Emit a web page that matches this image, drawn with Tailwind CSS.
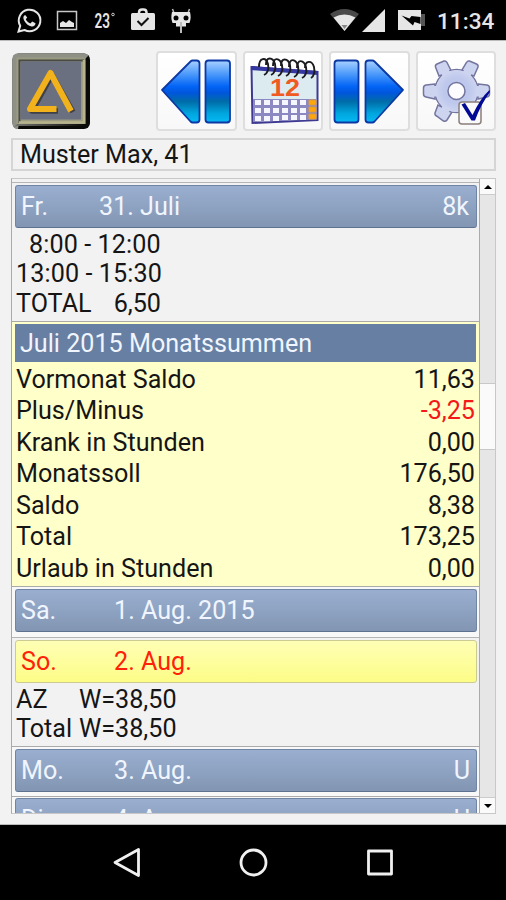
<!DOCTYPE html>
<html lang="de">
  <head>
    <meta charset="UTF-8" />
    <meta name="viewport" content="width=device-width, initial-scale=1.0" />
    <title>Zeiterfassung</title>
    <script src="https://cdn.jsdelivr.net/npm/@tailwindcss/browser@4"></script>
  </head>
  <body class="bg-black">
    <div class="flex h-[900px] w-[506px] flex-col overflow-hidden bg-[#f2f2f2] font-['Roboto',sans-serif] text-[25.150px] text-[#151515]">
      <!-- Status bar -->
      <header class="flex h-10 shrink-0 items-center bg-black text-[#e6e6e6]">
        <svg class="h-10 w-[200px]" viewBox="0 0 200 40">
          <path d="M18.500 31.500l1.700-5.700A10.800 10.800 0 1 1 24.500 30z" fill="none" stroke="#e6e6e6" stroke-width="2" />
          <path d="M25.200 15c-2 .8-2.300 3-1.200 5.200 1.600 3.300 4.500 5.700 7.600 6.300 2 .3 4-1 3.900-3.200l-3.300-1.700-1.800 1.900c-2.200-.8-3.600-2.200-4.600-4.200l1.400-1.700z" fill="#e6e6e6" />
          <rect x="57.500" y="11.500" width="19" height="18" fill="none" stroke="#c8c8c8" stroke-width="1.500" />
          <path d="M60 27v-4l3-2 3 2 3-3 3 2 2 1v4z" fill="#e6e6e6" />
          <text x="94.500" y="27.500" font-size="19.500" font-weight="600" textLength="15.500" lengthAdjust="spacingAndGlyphs" fill="#e6e6e6">23</text>
          <circle cx="113" cy="14.500" r="1.300" fill="none" stroke="#ccc" />
          <path d="M139 14v-1.500q0-3 3-3h1.500q3 0 3 3V14" fill="none" stroke="#e6e6e6" stroke-width="2.500" />
          <rect x="131" y="13" width="24" height="17" rx="1.500" fill="#e6e6e6" />
          <path d="M137.500 21l4 4 7-7" fill="none" stroke="#111" stroke-width="2" />
          <path d="M174 13l-1.500-4M188 13l1.500-4" stroke="#bbb" stroke-width="1.500" />
          <path d="M172 12h18q1.500 6-.5 11H186v3.500h-10V23h-3.500q-2-5-.5-11z" fill="#e6e6e6" />
          <circle cx="176" cy="18" r="2.500" />
          <circle cx="186" cy="18" r="2.500" />
          <path d="M181 22v11" stroke="#bbb" stroke-width="2" />
        </svg>
        <svg class="ml-[130px] h-10 w-[100px]" viewBox="330 0 100 40">
          <path d="M330 14q14.500-10 29 0L344.500 31z" fill="#4a4a4a" />
          <path d="M333.500 17.500q11-6 22 0L344.500 31z" fill="#e6e6e6" />
          <path d="M341.500 25h6l-3 4z" fill="#888" />
          <path d="M385 9v23h-23z" fill="#e6e6e6" />
          <path d="M420 14h5v12h-5z" fill="#555" />
          <rect x="398" y="10" width="23" height="20" fill="#e6e6e6" />
          <path d="M401.500 15.500l8 3 2-2.500 9 1v7l-6-2-1.500 3.500z" />
        </svg>
        <span class="ml-[7px] w-[58px] whitespace-nowrap pt-1 text-[22.600px] font-medium">11:34</span>
      </header>

      <main class="flex h-[785px] shrink-0 flex-col border-y border-[#bbb] pr-[10px] pl-[11px]">
        <!-- Toolbar -->
        <div class="mt-[10px] flex h-20 shrink-0 gap-[6px]">
          <svg class="mt-0.5 mr-auto h-[78px] w-20" viewBox="11 53 80 78">
            <defs>
              <linearGradient id="edge" x1="0" y1="0" x2="1" y2="0">
                <stop offset="0" stop-color="#75766e" />
                <stop offset="1" stop-color="#0b0b0a" />
              </linearGradient>
            </defs>
            <rect x="12.500" y="53.500" width="77.500" height="75.500" rx="6" fill="#0a0a09" />
            <path d="M18 129q-5.500 0-5.500-6V59q0-5.500 5.500-5.500h66q3 0 4.500 2L84 60 19 124z" fill="#8f9187" />
            <path d="M14 127l5-5h65v4H17z" fill="url(#edge)" />
            <rect x="16.500" y="57.500" width="69" height="66.500" fill="#9b9b82" />
            <path d="M19.500 123V60.500H84" fill="none" stroke="#4b4b45" stroke-width="2" />
            <path d="M19 122.500h65V60" fill="none" stroke="#b6b38d" stroke-width="2.500" />
            <rect x="20.500" y="61.500" width="60.500" height="58" fill="#6b7080" />
            <path d="M58 111H32L52 75l21 37" fill="none" stroke="#404047" stroke-width="5.500" stroke-linejoin="round" />
            <path d="M56.500 109H30L50.500 73l20.500 38" fill="none" stroke="#f2b21c" stroke-width="6" stroke-linejoin="round" />
          </svg>
          <button class="h-20 w-[80.500px] rounded border-2 border-[#dedede] bg-linear-to-b from-white to-[#f8f8f8]">
            <svg class="h-[76px] w-[76px]" viewBox="158.500 53 76 76">
              <defs>
                <linearGradient id="blue" x1="0" y1="0" x2="0" y2="1">
                  <stop offset="0" stop-color="#a9d1ff" />
                  <stop offset=".22" stop-color="#4b99fb" />
                  <stop offset=".42" stop-color="#0264f5" />
                  <stop offset=".52" stop-color="#0056dd" />
                  <stop offset=".66" stop-color="#006ca8" />
                  <stop offset=".85" stop-color="#00a5dd" />
                  <stop offset="1" stop-color="#08b9f5" />
                </linearGradient>
              </defs>
              <g fill="url(#blue)" stroke="#0b38a5" stroke-width="1.800" stroke-linejoin="round">
                <path d="M162.500 90L191 61.500q1-1 2-1h4q3 0 3 3v56q0 3-3 3h-4q-1 0-2-1z" />
                <rect x="206" y="60.500" width="24.500" height="62" rx="3" />
              </g>
            </svg>
          </button>
          <button class="h-20 w-[80.500px] rounded border-2 border-[#dedede] bg-linear-to-b from-white to-[#f8f8f8]">
            <svg class="h-[76px] w-[76px]" viewBox="245 53 76 76">
              <path d="M251.500 67L317.500 72v48l-65 3z" fill="#dcebef" stroke="#3e3a92" stroke-width="2" />
              <path d="M251 68l67 5" stroke="#3538a0" stroke-width="4" />
              <path d="M253 99h64v20.500l-64 2.500z" fill="#8b88c2" />
              <g fill="#f5f6ff">
                <path d="M255 100h6v5h-6zM264 100h6v5h-6zM273 100h6v5h-6zM282 100h6v5h-6zM291 100h6v5h-6zM300 100h6v5h-6z" />
                <path d="M255 108h6v5h-6zM264 108h6v5h-6zM273 108h6v5h-6zM282 108h6v5h-6zM291 108h6v5h-6zM300 108h6v5h-6z" />
                <path d="M255 116h6v5h-6zM264 116h6v5h-6zM273 116h6v5h-6zM282 115h6v5h-6zM291 115h6v5h-6zM300 115h6v5h-6z" />
              </g>
              <path d="M309 100h7v5h-7zM309 107h7v5h-7zM309 114h7v5h-7z" fill="#ffa60c" stroke="#d99a3c" />
              <text x="270" y="95.500" font-family="Liberation Sans" font-size="23" font-weight="700" textLength="30" lengthAdjust="spacingAndGlyphs" fill="#f05a22">12</text>
              <g fill="none" stroke="#1b1b1f" stroke-width="1.900">
                <path d="M259 67c0-10 7-10 9-3 1 5 0 9-4 11" />
                <path d="M266 65c0-9 7-8 9-1 1 5 0 9-4 11" />
                <path d="M273 66c0-10 7-8 9-1 1 5 0 9-4 11" />
                <path d="M281 66c0-9 7-8 9-1 1 5 0 9-4 11" />
                <path d="M289 67c0-10 7-8 9-1 1 5 0 9-4 11" />
                <path d="M297 68c0-10 7-8 9-1 1 5 0 9-4 11" />
                <path d="M305 68c0-8 7-8 9-1 1 5 0 9-3 11" />
              </g>
            </svg>
          </button>
          <button class="h-20 w-[80.500px] rounded border-2 border-[#dedede] bg-linear-to-b from-white to-[#f8f8f8]">
            <svg class="h-[76px] w-[76px]" viewBox="331.500 53 76 76">
              <g fill="url(#blue)" stroke="#0b38a5" stroke-width="1.800" stroke-linejoin="round">
                <rect x="335" y="60.500" width="24" height="62" rx="3" />
                <path d="M403.500 90L375 61.500q-1-1-2-1h-4q-3 0-3 3v56q0 3 3 3h4q1 0 2-1z" />
              </g>
            </svg>
          </button>
          <button class="h-20 w-[80.500px] rounded border-2 border-[#dedede] bg-linear-to-b from-white to-[#f8f8f8]">
            <svg class="h-[76px] w-[76px]" viewBox="418 53 76 76">
              <defs>
                <radialGradient id="gear">
                  <stop offset="0" stop-color="#bcc5ea" />
                  <stop offset=".6" stop-color="#bec8ec" />
                  <stop offset="1" stop-color="#cdd4f0" />
                </radialGradient>
              </defs>
              <!-- Teeth are outlined first, then the hub is laid over them -->
              <g fill="#cdd4f0" stroke="#73759f" stroke-width="1.500">
                <path d="M439 76l-3.500-9q-.5-2 1.500-3l7-3q2-.5 3 1.500l4.500 9z" />
                <path d="M474 76l4-9q.5-2-1.500-3l-7-3q-2-.5-3 1.500l-5.500 9z" />
                <path d="M435 84l-9 1q-2.500.5-2.500 3v6q0 2.500 2.500 3l9 2z" />
                <path d="M478 84l9 1q2.500.5 2.500 3v6q0 2.500-2.500 3l-9 2z" />
                <path d="M438 105l-3 8q-.5 2 1.500 3l7 5q2 1 3.500-1l5-8z" />
                <path d="M475 105l3 8q.5 2-1.500 3l-6 5q-2 1-3.500-1l-5-8z" />
                <circle cx="456.500" cy="91" r="21.500" />
              </g>
              <circle cx="456.500" cy="91" r="21" fill="url(#gear)" />
              <path d="M436.500 86h-5v10.500h6zM476.500 86h5v10.500h-6zM442.500 76l-3.500-7 7-3 5 7zM470.500 76l3.500-7-7-3-5 7zM443 105l-4 8 6 4 6-8z" fill="#cdd4f0" />
              <circle cx="456.500" cy="91" r="8.500" fill="#fcfcff" stroke="#73759f" stroke-width="1.500" />
              <rect x="459" y="102" width="22" height="22" rx="3" fill="#fafafa" stroke="#8b7f7c" stroke-width="1.500" />
              <path d="M461.500 104.500l3.500-1.500 7.500 12q8-17 17-25l.5 2q-9 12-15 28.500h-3.500z" fill="#020994" />
            </svg>
          </button>
        </div>

        <!-- Employee -->
        <div class="mt-[7px] flex h-[33px] shrink-0 items-center border-2 border-[#d5d5d5] pl-[7px]">Muster Max, 41</div>

        <!-- Time sheet -->
        <div class="mt-[7px] flex h-[636px] shrink-0 overflow-hidden border border-[#c8c8c8] border-l-[#aaa]">
          <div class="flex h-full w-[468px] shrink-0 flex-col overflow-hidden border-r border-[#aaa]">
            <section class="mt-[3px] h-[139px] shrink-0 border-t border-[#b5b5b5]">
              <div class="mt-[2px] mr-[2px] ml-[3px] flex h-[43px] items-center rounded-[3px] border border-[#7085a5] border-b-[#5d7190] bg-linear-to-b from-[#9aafd0] to-[#8296b3] pr-[7px] pl-[5px] text-[#f0f5ff]">
                <span class="w-[78px]">Fr.</span>
                <span class="flex-1">31. Juli</span>
                <span>8k</span>
              </div>
              <div class="pt-[1.500px] pl-[4px] leading-[29.700px]">
                <p class="pl-[13px] tracking-[0.100px]">8:00 - 12:00</p>
                <p class="tracking-[0.100px]">13:00 - 15:30</p>
                <p class="flex w-[145px] justify-between"><span>TOTAL</span><span>6,50</span></p>
              </div>
            </section>

            <section class="h-[265px] shrink-0 border-t border-[#aaa] bg-[#ffffca]">
              <h2 class="mx-[3px] mt-[2px] mb-[1.500px] flex h-[38px] items-center bg-[#677fa2] pl-[5px] pt-px text-[#f0f5ff]">Juli 2015 Monatssummen</h2>
              <div class="flex flex-col pr-[4px] pl-[4px] leading-[31.600px]">
                <p class="flex justify-between"><span>Vormonat Saldo</span><span>11,63</span></p>
                <p class="flex justify-between"><span>Plus/Minus</span><span class="text-[#f41818]">-3,25</span></p>
                <p class="flex justify-between"><span>Krank in Stunden</span><span>0,00</span></p>
                <p class="flex justify-between"><span>Monatssoll</span><span>176,50</span></p>
                <p class="flex justify-between"><span>Saldo</span><span>8,38</span></p>
                <p class="flex justify-between"><span>Total</span><span>173,25</span></p>
                <p class="flex justify-between"><span>Urlaub in Stunden</span><span>0,00</span></p>
              </div>
            </section>

            <section class="h-[51px] shrink-0 border-t border-[#aaa] bg-[#f8f8f8]">
              <div class="mt-[2px] mr-[2px] ml-[3px] flex h-[43px] items-center rounded-[3px] border border-[#7085a5] border-b-[#5d7190] bg-linear-to-b from-[#9aafd0] to-[#8296b3] pr-[7px] pl-[5px] text-[#f0f5ff]">
                <span class="w-[93px]">Sa.</span>
                <span>1. Aug. 2015</span>
              </div>
            </section>

            <section class="h-[109px] shrink-0 border-t border-[#b5b5b5]">
              <div class="mt-[2px] mr-[2px] ml-[3px] flex h-[43px] items-center rounded-[3px] border border-[#cccb92] bg-linear-to-b from-[#ffffb5] to-[#fcfc86] pr-[7px] pl-[5px] text-[#ff2208]">
                <span class="w-[93px]">So.</span>
                <span>2. Aug.</span>
              </div>
              <div class="grid grid-cols-[63px_auto] pt-[1.500px] pl-[4px] leading-[29.700px]">
                <span>AZ</span><span>W=38,50</span>
                <span>Total</span><span>W=38,50</span>
              </div>
            </section>

            <section class="h-[50px] shrink-0 border-t border-[#aaa] bg-[#f8f8f8]">
              <div class="mt-[2px] mr-[2px] ml-[3px] flex h-[43px] items-center rounded-[3px] border border-[#7085a5] border-b-[#5d7190] bg-linear-to-b from-[#9aafd0] to-[#8296b3] pr-[6px] pl-[5px] text-[#f0f5ff]">
                <span class="w-[93px]">Mo.</span>
                <span class="flex-1">3. Aug.</span>
                <span>U</span>
              </div>
            </section>

            <section class="h-[50px] shrink-0 border-t border-[#aaa] bg-[#f8f8f8]">
              <div class="mt-px mr-[2px] ml-[3px] flex h-[43px] items-center rounded-[3px] border border-[#7085a5] border-b-[#5d7190] bg-linear-to-b from-[#9aafd0] to-[#8296b3] pr-[6px] pl-[5px] text-[#f0f5ff]">
                <span class="w-[93px]">Di.</span>
                <span class="flex-1">4. Aug.</span>
                <span>U</span>
              </div>
            </section>
          </div>

          <!-- Scrollbar -->
          <div class="flex flex-1 flex-col bg-[#e6e6e6]">
            <div class="flex h-4 shrink-0 items-center justify-center border-b border-[#ccc] bg-[#fafafa]">
              <svg class="h-1 w-2" viewBox="0 0 8 4"><path d="M0 4l4-4 4 4z" /></svg>
            </div>
            <div class="mt-[188px] h-[67px] shrink-0 border-y border-[#c8c8c8] bg-[#fafafa]"></div>
            <div class="mt-auto flex h-4 shrink-0 items-center justify-center border-t border-[#ccc] bg-[#fafafa]">
              <svg class="h-1 w-2" viewBox="0 0 8 4"><path d="M0 0h8l-4 4z" /></svg>
            </div>
          </div>
        </div>
      </main>

      <!-- Navigation -->
      <nav class="flex h-[75px] shrink-0 bg-black">
        <svg class="h-[75px] w-[506px]" viewBox="0 825 506 75" fill="none" stroke="#f0f0f0" stroke-width="2.800" stroke-linejoin="round">
          <path d="M115 862.500l23.500-13v26z" />
          <circle cx="253.500" cy="862.500" r="12.500" />
          <rect x="368.500" y="851" width="23" height="23" />
        </svg>
      </nav>
    </div>
  </body>
</html>
